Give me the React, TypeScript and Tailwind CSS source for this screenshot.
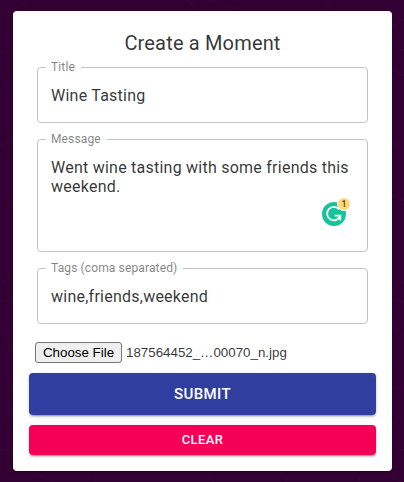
import type { ReactNode } from "react";

function Field({ label, children, tall }: { label: string; children: ReactNode; tall?: boolean }) {
  return (
    <div
      className={`relative mx-2 rounded border border-[#c4c4c4] px-[13px] pt-[17.5px] text-base leading-[19px] tracking-[0.24px] whitespace-nowrap text-black/80 ${tall ? "h-[113px]" : "h-14"}`}
    >
      <span className="absolute -top-2 left-2 bg-white pr-[6px] pl-[5px] text-xs leading-[14px] tracking-[0.13px] text-black/50">
        {label}
      </span>
      {children}
    </div>
  );
}

function Backdrop() {
  return (
    <svg className="absolute inset-0" width="404" height="482" fill="none" stroke="#3b053c" strokeWidth="1">
      <path d="M0 22L28 0M0 53L13 50M0 75L13 82M0 145L13 142M0 200L13 207M0 282L13 278M0 301H13M0 323L13 350M0 386L13 387M0 422L13 410M0 450H13" />
      <path d="M188 0Q192 7 200 11M208 0L240 10M324 0L333 10M392 27L404 19M392 50H404M392 68L404 76M392 146L404 142M392 195L404 201M392 290L404 281M392 301H404M392 323L404 340M392 387H404M392 425L404 414M392 450H404" />
      <path d="M94 482L101 471M30 471L55 482M208 471L213 482M286 482L292 471M361 471L359 482M380 471L402 482" />
    </svg>
  );
}

function AssistantBadge() {
  return (
    <svg className="absolute top-[57px] left-[283px]" width="30" height="32" viewBox="0 0 30 32">
      <circle cx="13" cy="17" r="12" fill="#15c39a" />
      <path d="M18 12.4A6.7 6.7 0 1 0 19.2 18.6" fill="none" stroke="#fff" strokeWidth="1.8" />
      <path d="M13.7 18.7H19.3V23.4" fill="none" stroke="#fff" strokeWidth="1.8" />
      <circle cx="23" cy="7" r="7" fill="#fff" />
      <circle cx="23" cy="7" r="6" fill="#ffd979" />
      <text x="23" y="10.2" textAnchor="middle" fontSize="9" fontWeight="500" letterSpacing="0" fill="#5f3c08">
        1
      </text>
    </svg>
  );
}

export default function App() {
  return (
    <div className="relative h-[482px] w-[404px] overflow-hidden bg-[#330033] pt-[11px] pl-[13px] font-[Roboto,sans-serif]">
      <Backdrop />
      <form className="relative flex h-[460px] w-[379px] flex-col rounded bg-white p-4 shadow-[0_2px_1px_-1px_rgba(0,0,0,0.2),0_1px_1px_rgba(0,0,0,0.14),0_1px_3px_rgba(0,0,0,0.12)]">
        <h6 className="mb-2 text-center text-xl leading-8 font-normal tracking-[0.17px] text-black/80">Create a Moment</h6>
        <div className="flex flex-col gap-4">
          <Field label="Title">Wine Tasting</Field>
          <Field label="Message" tall>
            Went wine tasting with some friends this
            <br />
            weekend.
            <AssistantBadge />
          </Field>
          <Field label="Tags (coma separated)">wine,friends,weekend</Field>
        </div>
        <div className="mt-[18px] mb-[10px] ml-[6px] flex h-[21px] items-center gap-1 font-['Liberation_Sans',Arial,sans-serif] text-[13.33px]">
          <button type="button" className="h-[21px] w-[87px] rounded-[3px] border border-[#767676] bg-[#efefef] leading-[19px] whitespace-nowrap text-black">
            Choose File
          </button>
          <span className="whitespace-nowrap text-black/80">187564452_…00070_n.jpg</span>
        </div>
        <button type="button" className="mb-[10px] h-[42px] shrink-0 rounded bg-[#303f9f] text-[15px] leading-[26px] font-medium tracking-[0.4px] text-white shadow-[0_3px_1px_-2px_rgba(0,0,0,0.2),0_2px_2px_rgba(0,0,0,0.14),0_1px_5px_rgba(0,0,0,0.12)]">
          SUBMIT
        </button>
        <button type="button" className="h-[30px] shrink-0 rounded bg-[#f50057] pb-px text-[13px] leading-[22px] font-medium tracking-[0.37px] text-white shadow-[0_3px_1px_-2px_rgba(0,0,0,0.2),0_2px_2px_rgba(0,0,0,0.14),0_1px_5px_rgba(0,0,0,0.12)]">
          CLEAR
        </button>
      </form>
    </div>
  );
}
